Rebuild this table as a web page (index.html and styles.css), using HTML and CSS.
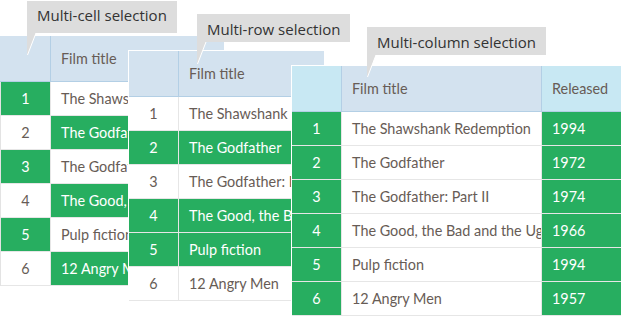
FILE: index.html
```html
<!DOCTYPE html>
<html>
<head>
<meta charset="utf-8">
<link rel="stylesheet" href="styles.css">
</head>
<body>
<div class="stage">

  <div class="panel p1">
    <div class="head">
      <div class="hc"></div>
      <div class="hc title">Film title</div>
    </div>
    <div class="body">
      <div class="c idx sel">1</div><div class="c txt">The Shawshank Redemption</div>
      <div class="c idx">2</div><div class="c txt sel">The Godfather</div>
      <div class="c idx sel">3</div><div class="c txt">The Godfather: Part II</div>
      <div class="c idx">4</div><div class="c txt sel">The Good, the Bad and the Ugly</div>
      <div class="c idx sel">5</div><div class="c txt">Pulp fiction</div>
      <div class="c idx">6</div><div class="c txt sel">12 Angry Men</div>
    </div>
  </div>

  <div class="tip t1">Multi-cell selection
    <svg class="ptr" width="10" height="23" viewBox="0 0 10 23"><polygon points="0,0 9,0 0,23" fill="#dddddd"/><line x1="9" y1="0" x2="0.5" y2="22" stroke="#ffffff" stroke-width="1"/></svg>
  </div>

  <div class="panel p2">
    <div class="head">
      <div class="hc"></div>
      <div class="hc title">Film title</div>
    </div>
    <div class="body">
      <div class="c idx">1</div><div class="c txt">The Shawshank Redemption</div>
      <div class="c idx sel">2</div><div class="c txt sel">The Godfather</div>
      <div class="c idx">3</div><div class="c txt">The Godfather: Part II</div>
      <div class="c idx sel">4</div><div class="c txt sel">The Good, the Bad and the Ugly</div>
      <div class="c idx sel">5</div><div class="c txt sel">Pulp fiction</div>
      <div class="c idx">6</div><div class="c txt">12 Angry Men</div>
    </div>
  </div>

  <div class="tip t2">Multi-row selection
    <svg class="ptr" width="10" height="23" viewBox="0 0 10 23"><polygon points="0,0 9,0 0,23" fill="#dddddd"/><line x1="9" y1="0" x2="0.5" y2="22" stroke="#ffffff" stroke-width="1"/></svg>
  </div>

  <div class="panel p3">
    <div class="head">
      <div class="hc hsel"></div>
      <div class="hc title">Film title</div>
      <div class="hc title hsel">Released</div>
    </div>
    <div class="body">
      <div class="c idx sel">1</div><div class="c txt">The Shawshank Redemption</div><div class="c txt sel">1994</div>
      <div class="c idx sel">2</div><div class="c txt">The Godfather</div><div class="c txt sel">1972</div>
      <div class="c idx sel">3</div><div class="c txt">The Godfather: Part II</div><div class="c txt sel">1974</div>
      <div class="c idx sel">4</div><div class="c txt">The Good, the Bad and the Ugly</div><div class="c txt sel">1966</div>
      <div class="c idx sel">5</div><div class="c txt">Pulp fiction</div><div class="c txt sel">1994</div>
      <div class="c idx sel">6</div><div class="c txt">12 Angry Men</div><div class="c txt sel">1957</div>
    </div>
  </div>

  <div class="tip t3">Multi-column selection
    <svg class="ptr" width="10" height="23" viewBox="0 0 10 23"><polygon points="0,0 9,0 0,23" fill="#dddddd"/><line x1="9" y1="0" x2="0.5" y2="22" stroke="#ffffff" stroke-width="1"/></svg>
  </div>

</div>
</body>
</html>
```
FILE: styles.css
```css
html, body {
  margin: 0;
  padding: 0;
  background: #ffffff;
}

.stage {
  position: relative;
  width: 621px;
  height: 316px;
  overflow: hidden;
  font-family: "Lato", "Open Sans", sans-serif;
  font-size: 14.4px;
  color: #675c56;
}

/* floating table windows */
.panel {
  position: absolute;
  background: #ffffff;
  border-top: 1px solid #ffffff;
  overflow: hidden;
}

.p1 { left: 0; top: 35px; width: 224px; }
.p2 { left: 128px; top: 50px; width: 195px; border-left: 1px solid #ffffff; }
.p3 { left: 291px; top: 65px; width: 340px; border-left: 1px solid #ffffff; }

.head {
  display: grid;
  gap: 1px;
  background: #b3cfe5;
  padding-bottom: 1px;
}

.body {
  display: grid;
  gap: 1px;
  background: #e6e6e6;
  grid-auto-rows: 33px;
  padding-bottom: 1px;
}

.p1 .head { grid-template-columns: 50px 1fr; }
.p1 .body { grid-template-columns: 49px 1fr; border-left: 1px solid #e3e3e3; }
.p2 .head, .p2 .body { grid-template-columns: 49px 1fr; }
.p3 .head, .p3 .body { grid-template-columns: 49px 199px 1fr; }

.hc {
  height: 45px;
  background: #d3e2ef;
  display: flex;
  align-items: center;
  white-space: nowrap;
  overflow: hidden;
}

.hc.title { padding-left: 10px; }
.hc.hsel { background: #c8e8f3; }

.c {
  background: #ffffff;
  display: flex;
  align-items: center;
  white-space: nowrap;
  overflow: hidden;
}

.c.idx { justify-content: center; }
.c.txt { padding-left: 10px; }

.c.sel {
  background: #27ae60;
  color: #ffffff;
}

/* callout labels */
.tip {
  position: absolute;
  background: #dddddd;
  color: #333333;
  font-family: "Open Sans", sans-serif;
  font-size: 15px;
  line-height: 20px;
  padding: 5px 10px 3px 10px;
  white-space: nowrap;
}

.t1 { left: 27px; top: 1px; padding-top: 4px; padding-bottom: 8px; }
.t2 { left: 197px; top: 14px; }
.t3 { left: 367px; top: 27px; }

.ptr {
  position: absolute;
  left: 0;
  top: 100%;
  display: block;
}
```
